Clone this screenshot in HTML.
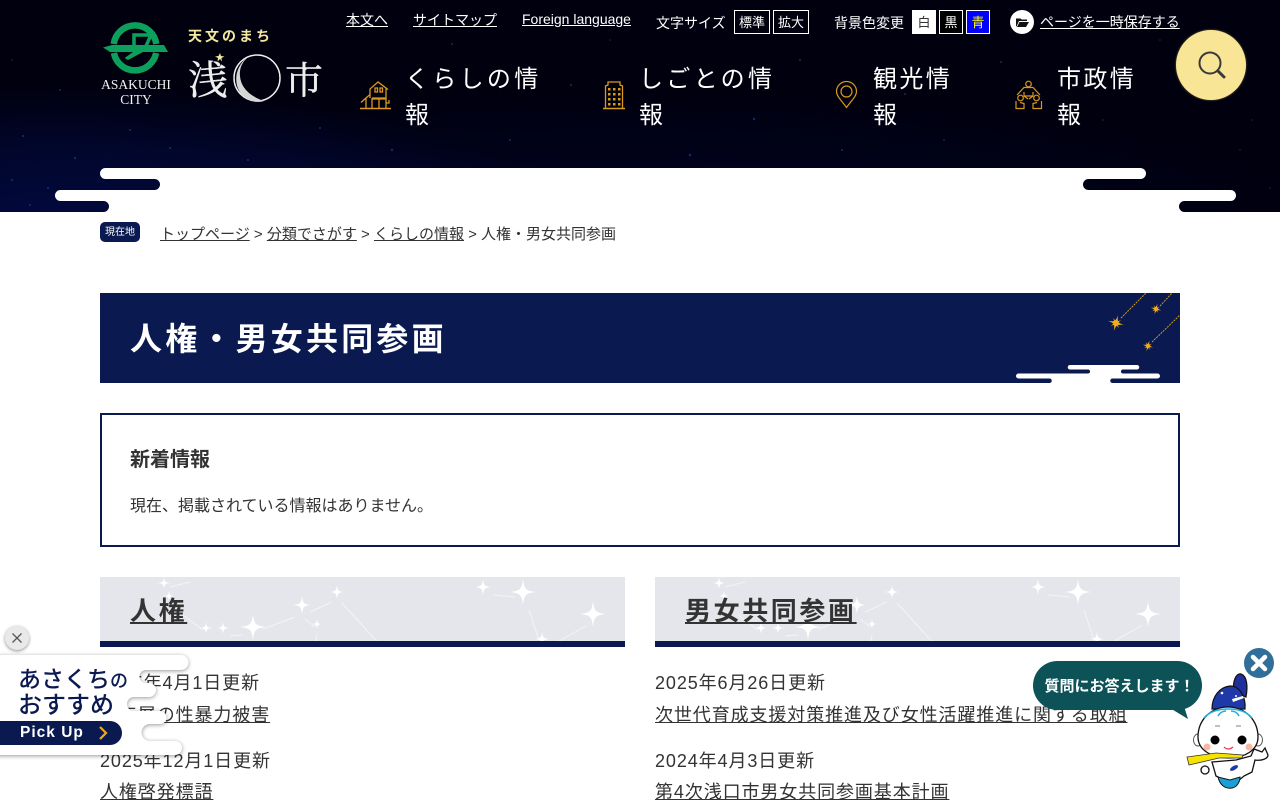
<!DOCTYPE html>
<html lang="ja">
<head>
<meta charset="utf-8">
<title>人権・男女共同参画</title>
<style>
html,body{margin:0;padding:0;background:#fff}
body{width:1280px;height:800px;overflow:hidden;position:relative;font-family:"Liberation Sans","Noto Sans CJK JP",sans-serif;color:#333}
.a{position:absolute;white-space:nowrap}
a{color:inherit;text-decoration:underline}
#hd{position:absolute;left:0;top:0;width:1280px;height:212px;overflow:hidden;
background:
radial-gradient(ellipse 520px 150px at 60px 235px,#020a40 0%,rgba(2,10,64,.6) 55%,rgba(2,10,64,0) 100%),
radial-gradient(ellipse 700px 120px at 620px 215px,rgba(3,8,50,.6) 0%,rgba(3,8,50,0) 100%),
#00000f}
.t{color:#fff;font-size:14px;line-height:20px}
.box{position:absolute;top:10px;height:22px;border:1px solid #fff;color:#fff;font-size:13px;line-height:24px;text-align:center;box-sizing:content-box}
.nav{color:#fff;font-size:24px;line-height:36px;letter-spacing:2.4px}
.nav span{letter-spacing:3.300px}
.bar{position:absolute;top:641px;height:6px;background:#0a1a50}
.sec{position:absolute;top:577px;width:525px;height:64px;background:#e5e6eb;overflow:hidden}
.h2{font-size:26px;font-weight:bold;letter-spacing:2.6px;line-height:36px;color:#333}
.it{font-size:18px;letter-spacing:.9px;line-height:26px;color:#333}
</style>
</head>
<body>
<div id="hd">
<svg width="1280" height="212" style="position:absolute;left:0;top:0" fill="#1d4f9c">
<g opacity=".6">
<circle cx="452" cy="44" r="1"/><circle cx="571" cy="85" r="1"/><circle cx="754" cy="119" r="1.2"/><circle cx="1001" cy="62" r="1"/><circle cx="905" cy="94" r="1"/><circle cx="1160" cy="40" r=".8"/><circle cx="392" cy="150" r="1.2"/><circle cx="48" cy="188" r="1"/><circle cx="23" cy="136" r="1"/><circle cx="75" cy="158" r="1.1"/><circle cx="170" cy="148" r="1"/><circle cx="248" cy="160" r="1"/><circle cx="320" cy="128" r="1"/><circle cx="510" cy="140" r="1"/><circle cx="690" cy="155" r="1.2"/><circle cx="842" cy="150" r="1"/><circle cx="944" cy="140" r=".9"/><circle cx="1103" cy="120" r=".8"/><circle cx="1252" cy="120" r=".8"/><circle cx="60" cy="90" r="1"/><circle cx="12" cy="60" r=".8"/><circle cx="130" cy="130" r="1"/><circle cx="610" cy="40" r=".8"/><circle cx="800" cy="60" r="1"/><circle cx="30" cy="205" r="1"/><circle cx="12" cy="180" r="1"/><circle cx="1270" cy="188" r=".8"/><circle cx="1240" cy="150" r=".7"/>
</g>
<path fill="#fff" d="M105.5 168H1140.5a5.5 5.5 0 0 1 0 11H1088.5a5.5 5.5 0 0 0 0 11H1230.5a5.5 5.5 0 0 1 0 11H1184.5a5.5 5.5 0 0 0 0 11H103.5a5.5 5.5 0 0 0 0-11H60.5a5.5 5.5 0 0 1 0-11H154.5a5.5 5.5 0 0 0 0-11H105.5a5.5 5.5 0 0 1 0-11z"/>
<!-- city mark -->
<path fill="none" stroke="#0d9f5c" stroke-width="6.500" d="M113.700 44A21.500 21.500 0 0 1 156.300 44M113.900 53A21.500 21.500 0 0 0 156.100 53"/>
<path fill="#0d9f5c" d="M103 47.500L112 45H164L168 52H143L128 60 124.500 58 133 52H110z"/>
<path fill="none" stroke="#0d9f5c" stroke-width="3.500" d="M134 46V35H151L146 46"/>
<!-- moon -->
<circle cx="257" cy="78" r="23" fill="none" stroke="#eee" stroke-width="1.500"/>
<path fill="#d6d6d6" d="M250 56C236 63 231 84 243 96 250 102 258 103 264 101 252 97 241 89 240 76 239 68 243 60 250 56z"/>
<path fill="#f5e9a0" d="M220 53l1 3 3.500.5-3 1.500.5 3.500-2-2.500-2.500 2.500.5-3.500-3-1.500 3.500-.5z"/>
<!-- nav icons -->
<g fill="none" stroke="#d9991c" stroke-width="1.300">
<path stroke-width="1.600" d="M360 108.500H391"/>
<path d="M366 108V98L361 102.500 370 94.500V89L378 82 388 89.500M386 88V98H372M370 94.500V98M372 98V108M386 98V108M372 99H386M379 99V108M386 103H389V100"/>
<rect x="375" y="88" width="2.500" height="4"/><rect x="380" y="88" width="2.500" height="4"/>
<path stroke-width="1.600" d="M603 108.500H625"/>
<path d="M605.500 108V86L608 85V82H620V85L622.500 86V108"/>
</g>
<g fill="#d9991c">
<rect x="608" y="88" width="2.500" height="2.500"/><rect x="613" y="88" width="2.500" height="2.500"/><rect x="618" y="88" width="2.500" height="2.500"/>
<rect x="608" y="93" width="2.500" height="2.500"/><rect x="613" y="93" width="2.500" height="2.500"/><rect x="618" y="93" width="2.500" height="2.500"/>
<rect x="608" y="98" width="2.500" height="2.500"/><rect x="613" y="98" width="2.500" height="2.500"/><rect x="618" y="98" width="2.500" height="2.500"/>
<rect x="608" y="103" width="2.500" height="2.500"/><rect x="613" y="103" width="2.500" height="2.500"/><rect x="618" y="103" width="2.500" height="2.500"/>
</g>
<g fill="none" stroke="#d9991c" stroke-width="1.200">
<path d="M846.500 107.500C841 100 836.500 96 836.500 91.500a10 10 0 0 1 20 0C856.500 96 852 100 846.500 107.500z"/>
<circle cx="846.500" cy="91.500" r="5.500"/>
<circle cx="1028.500" cy="84" r="2.800"/>
<path d="M1028.500 87.500H1024L1017 95M1028.500 87.500H1033L1040 95M1024 92V96H1033V92M1024 96L1028 99M1033 96L1029 99"/>
<circle cx="1020.500" cy="98" r="2.800"/><circle cx="1036.500" cy="98" r="2.800"/>
<path d="M1016 101V108.500H1024V103.500L1020 102.500M1041.500 101V108.500H1033V103.500L1037 102.500"/>
</g>
</svg>
<div class="a" style="left:96px;top:77px;width:80px;text-align:center;color:#f2f2f2;font:13.500px/15px 'Liberation Serif',serif;white-space:normal">ASAKUCHI<br>CITY</div>
<div class="a" style="left:188px;top:26px;color:#f5e9a0;font-size:14px;font-weight:bold;letter-spacing:3px;line-height:20px">天文のまち</div>
<div class="a" style="left:188px;top:52px;color:#eee;font:40px/52px 'Noto Serif CJK SC','Noto Serif CJK JP',serif;-webkit-text-stroke:.4px #eee">浅</div>
<div class="a" style="left:285px;top:52px;color:#eee;font:38px/52px 'Noto Serif CJK SC','Noto Serif CJK JP',serif;-webkit-text-stroke:.4px #eee">市</div>

<a class="a t" style="left:346px;top:10px">本文へ</a>
<a class="a t" style="left:413px;top:10px">サイトマップ</a>
<a class="a t" style="left:522px;top:9px">Foreign language</a>
<div class="a t" style="left:656px;top:13px">文字サイズ</div>
<div class="box" style="left:734px;width:34px">標準</div>
<div class="box" style="left:773px;width:34px">拡大</div>
<div class="a t" style="left:834px;top:13px">背景色変更</div>
<div class="box" style="left:912px;width:22px;background:#fff;color:#333">白</div>
<div class="box" style="left:939px;width:22px;background:#000;color:#fff">黒</div>
<div class="box" style="left:966px;width:22px;background:#00f;color:#ff0">青</div>
<div class="a" style="left:1010px;top:10px;width:24px;height:24px;border-radius:50%;background:#fff"></div>
<svg class="a" style="left:1010px;top:10px" width="24" height="24"><path fill="#111" d="M6 16.500V8.500H10.500L11.500 9.500H17V11H9L6.500 16.500zM9.500 12H19L16 17H7z"/></svg>
<a class="a t" style="left:1040px;top:12px">ページを一時保存する</a>

<div class="a nav" style="left:405px;top:62px"><span>くらしの</span>情<br>報</div>
<div class="a nav" style="left:639px;top:62px"><span>しごとの</span>情<br>報</div>
<div class="a nav" style="left:873px;top:62px">観光情<br>報</div>
<div class="a nav" style="left:1057px;top:62px">市政情<br>報</div>

<div class="a" style="left:1176px;top:30px;width:70px;height:70px;border-radius:50%;background:#f8e596;box-shadow:0 0 2px rgba(150,130,70,.8)"></div>
<svg class="a" style="left:1176px;top:30px" width="70" height="70" fill="none" stroke="#3a3a3a"><circle cx="34" cy="33" r="10.500" stroke-width="2"/><path stroke-width="3" stroke-linecap="round" d="M42 41L48 47"/></svg>
</div>

<div class="a" style="left:100px;top:222px;width:40px;height:20px;border-radius:5px;background:#0a1a50;color:#fff;font-size:10px;line-height:21px;text-align:center">現在地</div>
<div class="a" style="left:160px;top:224px;font-size:15px;line-height:22px;color:#333"><a>トップページ</a> &gt; <a>分類でさがす</a> &gt; <a>くらしの情報</a> &gt; 人権・男女共同参画</div>

<div class="a" style="left:100px;top:293px;width:1080px;height:90px;background:#0a1a50"></div>
<div class="a" style="left:130px;top:317px;font-size:32px;font-weight:bold;letter-spacing:3.200px;line-height:44px;color:#fff">人権・男女共同参画</div>
<svg class="a" style="left:0;top:0" width="1280" height="400">
<defs><path id="s4" d="M0-1C.1-.2.2-.1 1 0 .2.1.1.2 0 1-.1.2-.2.1-1 0-.2-.1-.1-.2 0-1z"/></defs>
<g stroke="#c39a2e" stroke-width="1" stroke-dasharray="2 1">
<path d="M1121 318L1146 293M1160 306L1172 293M1152 342L1180 315"/>
</g>
<g fill="#f0ac1c">
<use href="#s4" transform="translate(1116 323) rotate(15) scale(8)"/>
<use href="#s4" transform="translate(1116 323) rotate(60) scale(6)"/>
<circle cx="1116" cy="323" r="2.200"/>
<use href="#s4" transform="translate(1156 309) rotate(15) scale(5.500)"/>
<use href="#s4" transform="translate(1156 309) rotate(60) scale(4.500)"/>
<circle cx="1156" cy="309" r="1.700"/>
<use href="#s4" transform="translate(1148 346) rotate(15) scale(5.500)"/>
<use href="#s4" transform="translate(1148 346) rotate(60) scale(4.500)"/>
<circle cx="1148" cy="346" r="1.700"/>
</g>
<path fill="#fff" d="M1070 365H1137a2.250 2.250 0 0 1 0 4.500H1123a2 2 0 0 0 0 4H1157.500a2.500 2.500 0 0 1 0 5H1112.500a2.250 2.250 0 0 0 0 4.500H1049.500a2.250 2.250 0 0 0 0-4.500H1018.500a2.500 2.500 0 0 1 0-5H1088a2 2 0 0 0 0-4H1070a2.250 2.250 0 0 1 0-4.500z"/>
</svg>

<div class="a" style="left:100px;top:413px;width:1076px;height:130px;border:2px solid #0a1a50"></div>
<div class="a" style="left:130px;top:446px;font-size:20px;font-weight:bold;line-height:28px;color:#333">新着情報</div>
<div class="a" style="left:130px;top:495px;font-size:16px;line-height:24px;color:#333">現在、掲載されている情報はありません。</div>

<svg width="0" height="0" style="position:absolute">
<defs>
<g id="cons">
<g stroke="#fff" stroke-width="1" opacity=".55" fill="none">
<path d="M70 10L90 5M83 38L103 53M130 59L143 58M163 52L195 40M210 35L232 25M242 26L283 71M205 42L215 50M217 58L215 71M393 18L415 20M429 33L439 63M452 68L486 49"/>
</g>
<g fill="#fff">
<use href="#s4" transform="translate(64 6) scale(6)"/>
<use href="#s4" transform="translate(69 19) scale(5)"/>
<use href="#s4" transform="translate(106 51) scale(6)"/>
<use href="#s4" transform="translate(123 51) scale(6)"/>
<use href="#s4" transform="translate(153 50) scale(13)"/>
<use href="#s4" transform="translate(202 28) scale(9)"/>
<use href="#s4" transform="translate(237 15) scale(7)"/>
<use href="#s4" transform="translate(217 47) scale(5)"/>
<use href="#s4" transform="translate(383 10) scale(8)"/>
<use href="#s4" transform="translate(423 15) scale(13)"/>
<use href="#s4" transform="translate(493 37) scale(13)"/>
<use href="#s4" transform="translate(442 62) scale(7)"/>
</g>
</g>
</defs>
</svg>
<div class="sec" style="left:100px"><svg width="525" height="64"><use href="#cons"/></svg></div>
<div class="sec" style="left:655px"><svg width="525" height="64"><use href="#cons"/></svg></div>
<div class="bar" style="left:100px;width:525px"></div>
<div class="bar" style="left:655px;width:525px"></div>
<div class="a h2" style="left:130px;top:593px"><a>人権</a></div>
<div class="a h2" style="left:685px;top:593px"><a>男女共同参画</a></div>

<div class="a it" style="left:100px;top:670px">2025年4月1日更新</div>
<div class="a it" style="left:100px;top:702px"><a>若年層の性暴力被害</a></div>
<div class="a it" style="left:100px;top:748px">2025年12月1日更新</div>
<div class="a it" style="left:100px;top:779px"><a>人権啓発標語</a></div>
<div class="a it" style="left:655px;top:670px">2025年6月26日更新</div>
<div class="a it" style="left:655px;top:702px"><a>次世代育成支援対策推進及び女性活躍推進に関する取組</a></div>
<div class="a it" style="left:655px;top:748px">2024年4月3日更新</div>
<div class="a it" style="left:655px;top:779px"><a>第4次浅口市男女共同参画基本計画</a></div>

<!-- pick up banner -->
<svg class="a" style="left:0;top:620px;overflow:visible" width="200" height="150">
<path fill="#fff" style="filter:drop-shadow(0 1px 2px rgba(0,0,0,.4))" d="M-10 35H181a7.500 7.500 0 0 1 0 15H146a6.500 6.500 0 0 0 0 13H149a7 7 0 0 1 0 14H134a7 7 0 0 0 0 14H160a6.500 6.500 0 0 1 0 13H150a8.500 8.500 0 0 0 0 17H175a7 7 0 0 1 0 14H-10z"/>
</svg>
<div class="a" style="left:5px;top:626px;width:24px;height:24px;border-radius:50%;background:#e9e9e9;box-shadow:0 1px 3px rgba(0,0,0,.45)"></div>
<svg class="a" style="left:5px;top:626px" width="24" height="24" stroke="#555" stroke-width="1.300"><path d="M7.500 7.500L16.500 16.500M16.500 7.500L7.500 16.500"/></svg>
<div class="a" style="left:18px;top:662px;color:#0a1a50;font-size:23px;line-height:30px;font-family:'Noto Sans CJK JP',sans-serif;font-weight:500">あさくち<span style="font-size:18px">の</span></div>
<div class="a" style="left:18px;top:688px;color:#0a1a50;font-size:24px;line-height:30px;font-family:'Noto Sans CJK JP',sans-serif;font-weight:500">おすすめ</div>
<div class="a" style="left:-12px;top:721px;width:134px;height:24px;border-radius:12px;background:#0a1a50"></div>
<div class="a" style="left:20px;top:721px;color:#fff;font-size:15.500px;font-weight:bold;letter-spacing:1px;line-height:24px">Pick Up</div>
<svg class="a" style="left:96px;top:724px" width="14" height="18" fill="none" stroke="#eda91c" stroke-width="2.200"><path d="M4 3L10 9 4 15"/></svg>

<!-- chat -->
<svg class="a" style="left:0;top:0" width="1280" height="800">
<path fill="#0c5257" d="M1165 705L1188 719 1183 703z"/>
<circle cx="1259" cy="663" r="15" fill="#2f6f9a"/>
<path stroke="#fff" stroke-width="4.500" stroke-linecap="round" d="M1253 657L1265 669M1265 657L1253 669"/>
<!-- mascot -->
<path fill="#1f2f9c" stroke="#111" stroke-width="1.200" d="M1234 692C1232 682 1236 673 1241 674 1247 676 1248 686 1246 697z"/>
<path fill="#1f39a8" stroke="#111" stroke-width="1.200" d="M1212 709C1212 696 1220 687 1230 686 1240 686 1246 697 1245 709z"/>
<g fill="#fff"><circle cx="1222" cy="693" r="1.300"/><circle cx="1236" cy="696" r="1"/><path d="M1232 699L1243 696 1244 698 1233 702z"/></g>
<path fill="#fff" stroke="#111" stroke-width="1.300" d="M1212 762L1236 760 1251 756 1254 749 1262 752 1265 748 1268 755C1268 759 1261 761 1255 760L1252 772 1244 776 1238 781 1226 781 1216 776z"/>
<path fill="#1aa0d8" stroke="#111" stroke-width="1" d="M1218 777C1220 786 1226 789 1232 788 1237 787 1240 782 1240 777L1230 780z"/>
<ellipse cx="1234" cy="768" rx="4.500" ry="2" transform="rotate(-30 1234 768)" fill="#1f39a8"/>
<ellipse cx="1198" cy="740" rx="4.500" ry="6" fill="#fff" stroke="#555"/><ellipse cx="1258" cy="740" rx="4.500" ry="6" fill="#fff" stroke="#555"/>
<path fill="#fff" stroke="#111" stroke-width="1.300" d="M1198 737C1198 719 1212 707 1228 707 1245 707 1258 720 1258 737 1258 750 1245 758 1228 758 1212 758 1198 750 1198 737z"/>
<path fill="none" stroke="#1ab0e0" stroke-width="1.500" d="M1204 718C1209 712 1218 709 1229 709 1240 709 1247 712 1252 718M1218 716C1220 712 1224 711 1226 711M1231 711C1234 711 1237 712 1239 716"/>
<circle cx="1215" cy="740" r="4.500" fill="#000"/><circle cx="1242" cy="740" r="4.500" fill="#000"/>
<circle cx="1207" cy="747" r="3.500" fill="#f7b7a3"/><circle cx="1249" cy="747" r="3.500" fill="#f7b7a3"/>
<path d="M1224 747Q1228 751 1233 747" fill="none" stroke="#e8384f" stroke-width="1.200"/>
<path stroke="#aaa" stroke-width="1.500" d="M1215 726H1220M1236 726H1241"/>
<path fill="#f6e400" stroke="#333" stroke-width=".8" d="M1187 757L1216 753 1243 755 1242 758 1219 758 1189 765z"/>
<circle cx="1205" cy="770" r="4" fill="#fff" stroke="#111" stroke-width="1.300"/>
</svg>
<div class="a" style="left:1033px;top:661px;width:169px;height:49px;border-radius:24.500px;background:#0c5257"></div>
<div class="a" style="left:1035px;top:661px;width:169px;height:49px;line-height:51px;color:#fff;font-size:15px;font-weight:bold;text-align:center">質問にお答えします！</div>
</body>
</html>
